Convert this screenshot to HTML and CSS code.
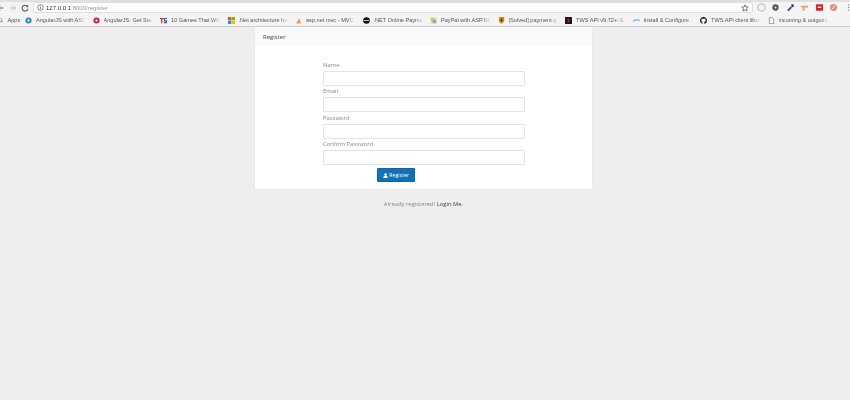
FILE: index.html
```html
<!DOCTYPE html>
<html lang="en">
<head>
<meta charset="utf-8">
<title>Register</title>
<link rel="stylesheet" href="styles.css">
</head>
<body>
<header class="chrome">
  <div class="toolbar">
    <div class="nav">
      <svg class="nav-icon" viewBox="0 0 10 10"><path d="M9 5H2M5 2L2 5l3 3" fill="none" stroke="#555" stroke-width="1.2"/></svg>
      <svg class="nav-icon" viewBox="0 0 10 10"><path d="M1 5h7M5 2l3 3-3 3" fill="none" stroke="#bbb" stroke-width="1.2"/></svg>
      <svg class="nav-icon" viewBox="0 0 10 10"><path d="M8.2 3.2A3.7 3.7 0 1 0 8.7 6" fill="none" stroke="#555" stroke-width="1.3"/><path d="M9 1v3.2H5.8z" fill="#555"/></svg>
    </div>
    <div class="omnibox">
      <svg class="info" viewBox="0 0 10 10"><circle cx="5" cy="5" r="4" fill="none" stroke="#555"/><path d="M5 4.300v3M5 2.500v1" stroke="#555"/></svg>
      <span class="url"><span class="host">127.0.0.1</span>:8000/register</span>
      <svg class="star" viewBox="0 0 10 10"><path d="M5 1l1.200 2.700 2.800.3-2.100 1.900.6 2.900L5 7.300 2.500 8.800l.6-2.900L1 4l2.800-.3z" fill="none" stroke="#555"/></svg>
    </div>
    <div class="extensions">
      <svg class="ext" viewBox="0 0 10 10"><circle cx="5" cy="5" r="4" fill="none" stroke="#c4c4c4" stroke-width="1.500"/></svg>
      <svg class="ext" viewBox="0 0 10 10"><circle cx="5" cy="5" r="3.500" fill="#555"/><circle cx="5" cy="5" r="1.200" fill="#ddd"/></svg>
      <svg class="ext" viewBox="0 0 10 10"><path d="M2 8.500L6 4.500" stroke="#26518f" stroke-width="2"/><path d="M6 1.500h2.500v3H6z" fill="#333"/></svg>
      <svg class="ext" viewBox="0 0 10 10"><path d="M1 3h8v2H5v4H3V5H1z" fill="#e8a06a"/></svg>
      <svg class="ext" viewBox="0 0 10 10"><rect x="1" y="1.500" width="8" height="7" rx="1" fill="#d2232a"/><rect x="3" y="4" width="4" height="1.500" fill="#fff"/></svg>
      <svg class="ext" viewBox="0 0 10 10"><circle cx="5" cy="5" r="4" fill="#ec8a7c"/><path d="M3 7l4-4" stroke="#fff"/></svg>
      <svg class="ext menu" viewBox="0 0 4 10"><path d="M2 1v1.200M2 4.400v1.200M2 7.800V9" stroke="#555" stroke-width="1.200"/></svg>
    </div>
  </div>
  <nav class="bookmarks">
    <span class="bm apps"><svg class="fav" viewBox="0 0 8 8"><path d="M0 1h2v2H0z" fill="#d9534f"/><path d="M3 1h2v2H3z" fill="#f0ad4e"/><path d="M0 4h2v2H0z" fill="#5cb85c"/><path d="M3 4h2v2H3z" fill="#428bca"/></svg><span>Apps</span></span>
    <span class="bm"><svg class="fav" viewBox="0 0 8 8"><circle cx="4" cy="4" r="3.500" fill="#2a88c8"/><circle cx="4" cy="4" r="1.300" fill="#fff"/></svg><span class="bm-text">AngularJS with ASP.NET</span></span>
    <span class="bm"><svg class="fav" viewBox="0 0 8 8"><circle cx="4" cy="4" r="3.500" fill="#dd1144"/><circle cx="4" cy="4" r="1.300" fill="#fff"/></svg><span class="bm-text">AngularJS: Get Started</span></span>
    <span class="bm"><svg class="fav" viewBox="0 0 8 8"><path d="M0 1h4v1.300H2.700V7H1.300V2.300H0z" fill="#d2232a"/><path d="M4.500 1H8v1.300H5.800v1.400H8V7H4.500V5.700h2.200V5H4.500z" fill="#2a5db0"/></svg><span class="bm-text">10 Games That Will Teach</span></span>
    <span class="bm"><svg class="fav" viewBox="0 0 8 8"><path d="M0 0h3.800v3.800H0z" fill="#f25022"/><path d="M4.200 0H8v3.800H4.200z" fill="#7fba00"/><path d="M0 4.200h3.800V8H0z" fill="#00a4ef"/><path d="M4.200 4.200H8V8H4.200z" fill="#ffb900"/></svg><span class="bm-text">.Net architecture for</span></span>
    <span class="bm"><svg class="fav" viewBox="0 0 8 8"><path d="M1 7.500L5 1l2 6.500z" fill="#e9a063"/></svg><span class="bm-text">asp.net mvc - MVC and</span></span>
    <span class="bm"><svg class="fav" viewBox="0 0 8 8"><circle cx="4" cy="4" r="3.800" fill="#111"/><path d="M1 4h6" stroke="#ddd"/></svg><span class="bm-text">.NET Online Payment</span></span>
    <span class="bm"><svg class="fav" viewBox="0 0 8 8"><path d="M0 0h8v8H0z" fill="#e4e7d0"/><path d="M1 1h4v4H1z" fill="#e5c94a"/><path d="M3 3h4v4H3z" fill="#7fa8d0"/></svg><span class="bm-text">PayPal with ASP.NET</span></span>
    <span class="bm"><svg class="fav" viewBox="0 0 8 8"><path d="M1 0h6v5L4 8 1 5z" fill="#d88a1e"/><path d="M3 2h2v3H3z" fill="#333"/></svg><span class="bm-text">[Solved] payment gateway</span></span>
    <span class="bm"><svg class="fav" viewBox="0 0 8 8"><path d="M0 0h8v8H0z" fill="#1a1a1a"/><path d="M3 2h2v4H3z" fill="#c8161d"/></svg><span class="bm-text">TWS API v9.72+: ECl</span></span>
    <span class="bm"><svg class="fav" viewBox="0 0 8 8"><path d="M0 5c2-2 5-2 8-1" stroke="#6fb4e0" fill="none" stroke-width="1.500"/></svg><span class="bm-text">Install &amp; Configure Xampp</span></span>
    <span class="bm"><svg class="fav" viewBox="0 0 16 16"><path fill="#111" d="M8 0C3.580 0 0 3.580 0 8c0 3.540 2.290 6.530 5.470 7.590.4.070.55-.17.550-.38 0-.19-.010-.82-.010-1.490-2.010.370-2.530-.490-2.690-.940-.090-.230-.480-.940-.820-1.130-.280-.150-.680-.520-.010-.530.630-.010 1.080.580 1.230.820.720 1.210 1.870.870 2.330.660.070-.520.280-.870.510-1.070-1.780-.200-3.640-.890-3.640-3.950 0-.870.310-1.590.820-2.150-.080-.200-.360-1.020.080-2.120 0 0 .670-.210 2.200.820.640-.180 1.320-.270 2-.270s1.360.090 2 .270c1.530-1.040 2.200-.820 2.200-.820.440 1.100.160 1.920.080 2.120.510.560.820 1.270.820 2.150 0 3.070-1.870 3.750-3.650 3.950.290.250.540.730.540 1.480 0 1.070-.010 1.930-.010 2.200 0 .210.150.460.550.380A8.010 8.010 0 0 0 16 8c0-4.420-3.580-8-8-8z"/></svg><span class="bm-text">TWS API client library</span></span>
    <span class="bm"><svg class="fav" viewBox="0 0 8 8"><path d="M1.500.500h3.500l1.500 1.500v5.500h-5z" fill="#fff" stroke="#666" stroke-width=".7"/></svg><span class="bm-text">incoming &amp; outgoing</span></span>
  </nav>
</header>

<main class="page">
  <section class="card">
    <div class="card-head">Register</div>
    <form class="form">
      <label class="label" for="n">Name</label>
      <input class="input" id="n" type="text">
      <label class="label" for="e">Email</label>
      <input class="input" id="e" type="text">
      <label class="label" for="p">Password</label>
      <input class="input" id="p" type="password">
      <label class="label" for="c">Confirm Password</label>
      <input class="input" id="c" type="password">
      <button class="btn" type="button"><svg class="user" viewBox="0 0 10 10"><circle cx="5" cy="2.800" r="2.500" fill="#fff"/><path d="M.5 10c0-3.500 1.500-4.500 4.500-4.500s4.500 1 4.500 4.500z" fill="#fff"/></svg>Register</button>
    </form>
  </section>
  <p class="foot">Already registered! <a class="foot-link">Login Me.</a></p>
</main>
</body>
</html>
```

FILE: styles.css
```css
* { box-sizing: border-box; }
html, body { margin: 0; height: 100%; }
body {
  width: 850px;
  height: 400px;
  overflow: hidden;
  background: #eeeeee;
  font-family: "Open Sans", sans-serif;
  display: flex;
  flex-direction: column;
}
.chrome {
  height: 27px;
  flex: none;
  background: #f4f4f4;
  border-top: 2px solid #e0e0e0;
  border-bottom: 1px solid #cfcfcf;
  font-family: "Liberation Sans", sans-serif;
  filter: blur(0.3px);
}
.toolbar {
  height: 11px;
  display: flex;
  align-items: center;
}
.nav {
  display: flex;
  align-items: center;
  gap: 4.500px;
  width: 37px;
  flex: none;
  margin-left: -4px;
}
.nav-icon { width: 8px; height: 8px; flex: none; }
.omnibox {
  width: 720px;
  height: 11px;
  flex: none;
  background: #fff;
  border: 1px solid #dedede;
  border-radius: 2px;
  display: flex;
  align-items: center;
  padding: 0 2px 0 3px;
  font-size: 6px;
  color: #9a9a9a;
}
.info { width: 7px; height: 7px; flex: none; margin-right: 2px; }
.url { flex: 1; }
.host { color: #333; }
.star { width: 8px; height: 8px; flex: none; margin-right: 1px; }
.extensions { display: flex; align-items: center; gap: 5.500px; margin-left: 3.500px; flex: none; }
.ext { width: 9px; height: 9px; flex: none; }
.menu { width: 3px; margin-left: 3px; }
.bookmarks {
  height: 12px;
  margin-top: 1px;
  padding-left: 0.500px;
  display: flex;
  align-items: center;
  gap: 7.500px;
  font-size: 5.600px;
  color: #555;
  white-space: nowrap;
  overflow: hidden;
}
.bm { display: flex; align-items: center; flex: none; gap: 4px; width: 60px; }
.bm-text {
  width: 49px;
  overflow: hidden;
  -webkit-mask-image: linear-gradient(to right, #000 85%, transparent);
  mask-image: linear-gradient(to right, #000 85%, transparent);
}
.fav { width: 7px; height: 7px; flex: none; }
.apps { width: 20px; margin-left: -3px; gap: 3px; }

.page { flex: 1; display: flex; flex-direction: column; align-items: center; padding-right: 3px; filter: blur(0.25px); }
.card {
  width: 337px;
  height: 162px;
  background: #fff;
  box-shadow: 0 0 1px rgba(0, 0, 0, .12);
}
.card-head {
  height: 19px;
  padding-left: 8px;
  display: flex;
  align-items: center;
  background: #f9fafb;
  font-size: 6px;
  color: #444;
}
.form {
  margin-left: 68px;
  width: 202px;
  padding-top: 13px;
  display: flex;
  flex-direction: column;
}
.label {
  height: 11.500px;
  padding-top: 0.500px;
  font-size: 5.900px;
  line-height: 10px;
  color: #888;
}
.input {
  height: 15px;
  width: 202px;
  border: 1px solid #dfe4e8;
  border-radius: 1px;
  background: #fff;
  padding: 0;
  outline: none;
}
.btn {
  align-self: flex-start;
  margin: 3px 0 0 54px;
  width: 38px;
  height: 14px;
  background: #1272b8;
  border: 1px solid #0f65a5;
  border-radius: 1px;
  color: #fff;
  font: 5.300px "Open Sans", sans-serif;
  padding: 0;
  display: flex;
  align-items: center;
  justify-content: center;
  gap: 1.500px;
}
.user { width: 5px; height: 5px; flex: none; }
.foot {
  margin: 9px 0 0 0;
  font-size: 5.850px;
  line-height: 10px;
  color: #888;
  padding-top: 1px;
}
.foot-link { color: #444; }
```
